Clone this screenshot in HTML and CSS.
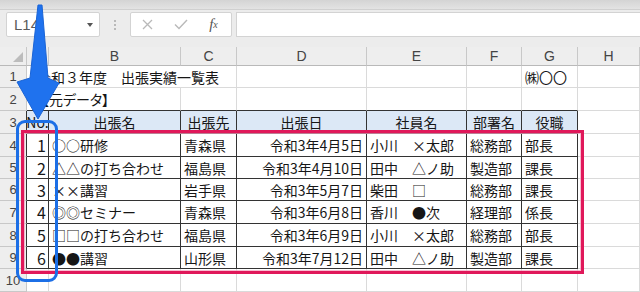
FILE: index.html
```html
<!DOCTYPE html>
<html lang="ja">
<head>
  <meta charset="UTF-8">
  <title>出張実績一覧表</title>
  <link rel="stylesheet" href="styles.css">
</head>
<body>
  <div class="app">
    <div class="topbar"></div>

    <div class="formula-bar">
      <div class="name-box"><span>L14</span><i class="caret"></i></div>
      <div class="grip"><b></b><b></b><b></b></div>
      <div class="fx-box">
        <span class="fx-btn">
          <svg width="11" height="11" viewBox="0 0 11 11"><path d="M1 1L10 10M10 1L1 10" stroke="#b9b9b9" stroke-width="1.3" fill="none"/></svg>
        </span>
        <span class="fx-btn">
          <svg width="14" height="11" viewBox="0 0 14 11"><path d="M1 5.5L5 9.5L13 1" stroke="#b9b9b9" stroke-width="1.4" fill="none"/></svg>
        </span>
        <span class="fx-btn fx-label">f<sub>x</sub></span>
      </div>
      <div class="formula-input"></div>
    </div>

    <div class="sheet">
      <div class="c ch corner"></div>
      <div class="c ch">A</div>
      <div class="c ch">B</div>
      <div class="c ch">C</div>
      <div class="c ch">D</div>
      <div class="c ch">E</div>
      <div class="c ch">F</div>
      <div class="c ch">G</div>
      <div class="c ch">H</div>

      <div class="c rh">1</div>
      <div class="c title">令和３年度　出張実績一覧表</div>
      <div class="c"></div>
      <div class="c"></div>
      <div class="c"></div>
      <div class="c">㈱〇〇</div>
      <div class="c"></div>

      <div class="c rh">2</div>
      <div class="c sub bb">【元データ】</div>
      <div class="c bb"></div>
      <div class="c bb"></div>
      <div class="c bb"></div>
      <div class="c bb"></div>
      <div class="c bb"></div>
      <div class="c"></div>

      <div class="c rh br">3</div>
      <div class="c t hd">No.</div>
      <div class="c t hd">出張名</div>
      <div class="c t hd">出張先</div>
      <div class="c t hd">出張日</div>
      <div class="c t hd">社員名</div>
      <div class="c t hd">部署名</div>
      <div class="c t hd">役職</div>
      <div class="c"></div>

      <div class="c rh br">4</div>
      <div class="c t num">1</div>
      <div class="c t">○○研修</div>
      <div class="c t">青森県</div>
      <div class="c t right">令和3年4月5日</div>
      <div class="c t">小川　×太郎</div>
      <div class="c t">総務部</div>
      <div class="c t">部長</div>
      <div class="c"></div>

      <div class="c rh br">5</div>
      <div class="c t num">2</div>
      <div class="c t">△△の打ち合わせ</div>
      <div class="c t">福島県</div>
      <div class="c t right">令和3年4月10日</div>
      <div class="c t">田中　△ノ助</div>
      <div class="c t">製造部</div>
      <div class="c t">課長</div>
      <div class="c"></div>

      <div class="c rh br">6</div>
      <div class="c t num">3</div>
      <div class="c t">××講習</div>
      <div class="c t">岩手県</div>
      <div class="c t right">令和3年5月7日</div>
      <div class="c t">柴田　□</div>
      <div class="c t">総務部</div>
      <div class="c t">課長</div>
      <div class="c"></div>

      <div class="c rh br">7</div>
      <div class="c t num">4</div>
      <div class="c t">◎◎セミナー</div>
      <div class="c t">青森県</div>
      <div class="c t right">令和3年6月8日</div>
      <div class="c t">香川　●次</div>
      <div class="c t">経理部</div>
      <div class="c t">係長</div>
      <div class="c"></div>

      <div class="c rh br">8</div>
      <div class="c t num">5</div>
      <div class="c t">□□の打ち合わせ</div>
      <div class="c t">福島県</div>
      <div class="c t right">令和3年6月9日</div>
      <div class="c t">小川　×太郎</div>
      <div class="c t">総務部</div>
      <div class="c t">部長</div>
      <div class="c"></div>

      <div class="c rh br">9</div>
      <div class="c t num">6</div>
      <div class="c t">●●講習</div>
      <div class="c t">山形県</div>
      <div class="c t right">令和3年7月12日</div>
      <div class="c t">田中　△ノ助</div>
      <div class="c t">製造部</div>
      <div class="c t">課長</div>
      <div class="c"></div>

      <div class="c rh">10</div>
      <div class="c"></div>
      <div class="c"></div>
      <div class="c"></div>
      <div class="c"></div>
      <div class="c"></div>
      <div class="c"></div>
      <div class="c"></div>
      <div class="c"></div>
    </div>

    <!-- annotations drawn over the sheet -->
    <div class="mark-red"></div>
    <div class="mark-blue"></div>
    <svg class="arrow" width="70" height="125" viewBox="0 0 70 125">
      <path d="M38 5L42 5L48 78L59 83L38 119L17 82L30 78Z" fill="#1f72ee" stroke="#1a64d6" stroke-width="1" stroke-linejoin="round"/>
    </svg>
  </div>
</body>
</html>
```

FILE: styles.css
```css
* {
  box-sizing: border-box;
}
body {
  margin: 0;
  background: #fff;
  font-family: "Noto Sans CJK JP", sans-serif;
}
.app {
  position: relative;
  width: 640px;
  height: 292px;
  overflow: hidden;
  background: #ececec;
}
.topbar {
  height: 10px;
  background: linear-gradient(#d4d4d4, #e3e3e3);
  border-bottom: 1px solid #d0d0d0;
}
.formula-bar {
  display: flex;
  align-items: flex-start;
  height: 37px;
  padding: 2px 0 0 6px;
  background: #ececec;
}
.name-box {
  display: flex;
  align-items: center;
  width: 94px;
  height: 25px;
  padding-left: 7px;
  background: #fff;
  border: 1px solid #d3d3d3;
  border-radius: 2px;
  font-family: "Liberation Sans", sans-serif;
  font-size: 15px;
  color: #5a5a5a;
}
.caret {
  margin-left: auto;
  margin-right: 6px;
  border-left: 3px solid transparent;
  border-right: 3px solid transparent;
  border-top: 4px solid #555;
}
.grip {
  display: flex;
  flex-direction: column;
  align-items: center;
  justify-content: center;
  gap: 2px;
  width: 30px;
  height: 25px;
}
.grip b {
  width: 2px;
  height: 2px;
  background: #a8a8a8;
  border-radius: 1px;
}
.fx-box {
  display: flex;
  align-items: center;
  width: 102px;
  height: 25px;
  background: #fff;
  border: 1px solid #d3d3d3;
  border-radius: 2px;
}
.fx-btn {
  display: flex;
  align-items: center;
  justify-content: center;
  width: 33px;
  height: 100%;
}
.fx-label {
  font-family: "Liberation Serif", serif;
  font-style: italic;
  font-size: 15px;
  color: #555;
}
.fx-label sub {
  font-size: 10px;
  vertical-align: -2px;
}
.formula-input {
  flex: 1;
  height: 25px;
  margin-left: 4px;
  background: #fff;
  border: 1px solid #d3d3d3;
  border-right: none;
}

.sheet {
  display: grid;
  grid-template-columns: 27px 22px 132px 56px 130px 100px 55px 56px 62px;
  grid-template-rows: 19px 22px 23px 23px 23px 22px 22px 23px 23px 22px 23px;
  background: #fff;
}
.c {
  display: flex;
  align-items: center;
  padding: 0 3px;
  border-right: 1px solid #dadada;
  border-bottom: 1px solid #dadada;
  font-size: 14px;
  line-height: 1;
  color: #161616;
  white-space: nowrap;
  overflow: visible;
}
.ch, .rh {
  justify-content: center;
  padding: 0;
  background: #eeeeee;
  border-color: #c8c8c8;
  font-family: "Liberation Sans", sans-serif;
  font-size: 14px;
  color: #444;
}
.ch {
  border-bottom-color: #b9b9b9;
}
.rh {
  font-size: 13px;
}
.corner {
  align-items: flex-end;
  justify-content: flex-end;
  padding: 0 3px 3px 0;
}
.corner::after {
  content: "";
  border-left: 10px solid transparent;
  border-bottom: 10px solid #bcbcbc;
}
.title {
  grid-column: span 3;
  padding-left: 10px;
}
.sub {
  grid-column: span 2;
  padding-left: 15px;
  font-feature-settings: "palt";
}
.bb {
  border-bottom-color: #333;
}
.br {
  border-right-color: #333;
}
.t {
  border-color: #333;
}
.hd {
  justify-content: center;
  background: #dce8f6;
}
.num {
  justify-content: flex-end;
  font-size: 16px;
  padding-right: 2px;
}
.right {
  justify-content: flex-end;
}

.mark-red {
  position: absolute;
  left: 21px;
  top: 130px;
  width: 563px;
  height: 144px;
  border: 3px solid #e0185a;
  box-shadow: inset 0 0 0 1px rgba(245, 160, 190, 0.7);
}
.mark-blue {
  position: absolute;
  left: 16px;
  top: 120px;
  width: 42px;
  height: 162px;
  border: 3px solid #1c6fe6;
  border-radius: 9px;
}
.arrow {
  position: absolute;
  left: 0;
  top: 0;
}
```
